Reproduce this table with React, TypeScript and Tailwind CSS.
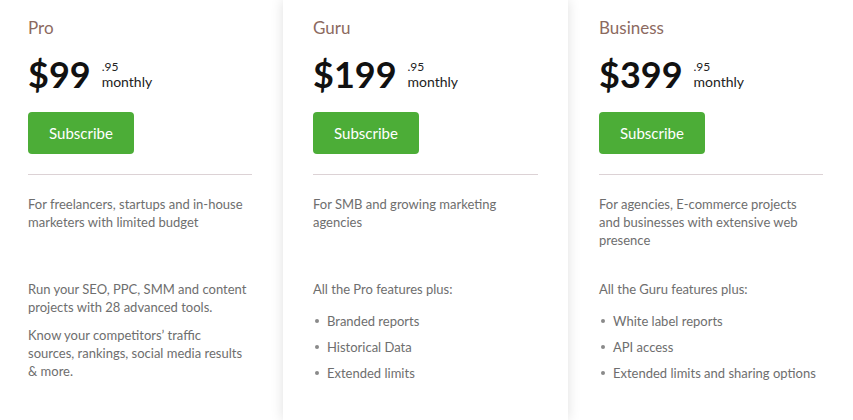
type Plan = {
  name: string;
  price: string;
  desc: string[];
  features: React.ReactNode;
};

const font = { fontFamily: '"Lato", "Open Sans", sans-serif' };

function Bullets({ intro, items }: { intro: string; items: string[] }) {
  return (
    <div>
      <p>{intro}</p>
      <ul className="mt-[14px] flex flex-col gap-[8px]">
        {items.map((item) => (
          <li key={item} className="flex items-center">
            <span className="ml-[2px] mr-[8px] h-[4px] w-[4px] rounded-full bg-[#8a8a8a]" />
            {item}
          </li>
        ))}
      </ul>
    </div>
  );
}

const plans: Plan[] = [
  {
    name: "Pro",
    price: "$99",
    desc: ["For freelancers, startups and in-house", "marketers with limited budget"],
    features: (
      <div className="flex flex-col gap-[10px]">
        <p>
          Run your SEO, PPC, SMM and content
          <br />
          projects with 28 advanced tools.
        </p>
        <p>
          Know your competitors’ traffic
          <br />
          sources, rankings, social media results
          <br />& more.
        </p>
      </div>
    ),
  },
  {
    name: "Guru",
    price: "$199",
    desc: ["For SMB and growing marketing", "agencies"],
    features: (
      <Bullets
        intro="All the Pro features plus:"
        items={["Branded reports", "Historical Data", "Extended limits"]}
      />
    ),
  },
  {
    name: "Business",
    price: "$399",
    desc: ["For agencies, E-commerce projects", "and businesses with extensive web", "presence"],
    features: (
      <Bullets
        intro="All the Guru features plus:"
        items={["White label reports", "API access", "Extended limits and sharing options"]}
      />
    ),
  },
];

function Column({ plan }: { plan: Plan }) {
  return (
    <div className="flex flex-col pt-[16px]">
      <h2 className="text-[17px] leading-[24px] text-[#8c6a5f]">{plan.name}</h2>

      <div className="mt-[16px] flex items-start">
        <span className="text-[36px] font-bold leading-[36px] text-[#111]">{plan.price}</span>
        <div className="ml-[11px] mt-[4px] flex flex-col text-[#222]">
          <span className="text-[12px] leading-[14px]">.95</span>
          <span className="text-[14px] leading-[15px]">monthly</span>
        </div>
      </div>

      <button className="mt-[20px] h-[42px] w-[106px] rounded-[4px] bg-[#4cad37] text-[15px] text-white">
        Subscribe
      </button>

      <div className="mt-[20px] border-t border-[#dcd2d5]" />

      <div className="mt-[20px] h-[85px] text-[13px] leading-[18px] text-[#6e6e6e]">
        {plan.desc.map((line) => (
          <div key={line}>{line}</div>
        ))}
      </div>

      <div className="text-[13px] leading-[18px] text-[#6e6e6e]">{plan.features}</div>
    </div>
  );
}

export default function App() {
  return (
    <main className="flex h-[420px] w-[853px] overflow-hidden bg-white" style={font}>
      <div className="w-[283px] pl-[28px] pr-[31px]">
        <Column plan={plans[0]} />
      </div>
      <div className="relative z-10 w-[285px] bg-white px-[30px] shadow-[0_0_12px_rgba(0,0,0,0.13)]">
        <Column plan={plans[1]} />
      </div>
      <div className="w-[285px] pl-[31px] pr-[30px]">
        <Column plan={plans[2]} />
      </div>
    </main>
  );
}
